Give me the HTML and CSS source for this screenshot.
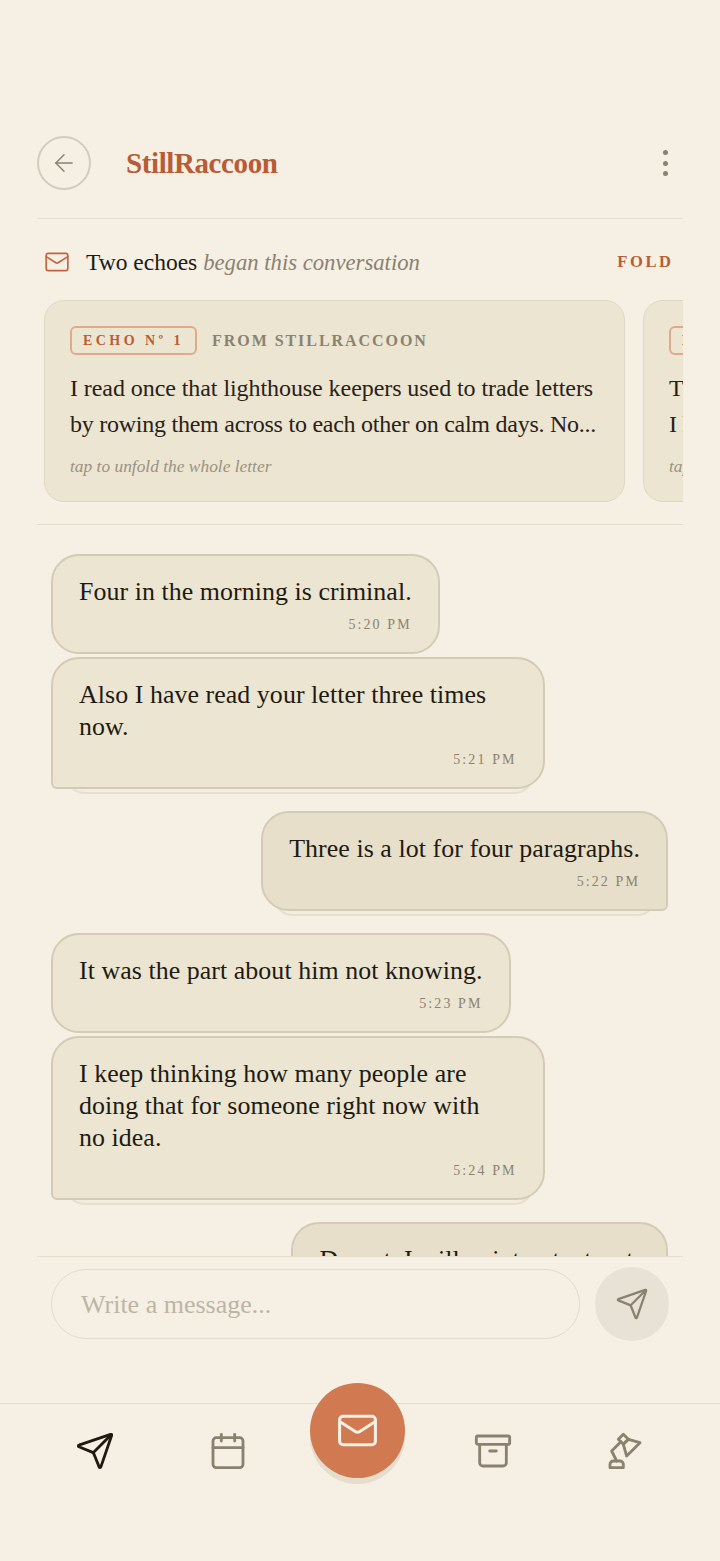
FILE: index.html
```html
<!DOCTYPE html>
<html lang="en">
<head>
<meta charset="utf-8">
<title>StillRaccoon</title>
<link rel="stylesheet" href="styles.css">
</head>
<body>
<div class="page">
  <div class="upper">
    <header class="top">
      <button class="back" aria-label="Back">
        <svg class="ic-back" viewBox="0 0 24 24"><path d="m12 19-7-7 7-7"/><path d="M19 12H5"/></svg>
      </button>
      <h1 class="name">StillRaccoon</h1>
      <div class="dots"><i></i><i></i><i></i></div>
    </header>
    <div class="echoes-row">
      <svg class="ic-mail" viewBox="0 0 24 24"><rect x="2" y="4" width="20" height="16" rx="2"/><path d="m22 7-8.97 5.7a1.94 1.94 0 0 1-2.06 0L2 7"/></svg>
      <p class="echoes-title">Two echoes <em>began this conversation</em></p>
      <span class="fold">FOLD</span>
    </div>
    <div class="cards">
      <article class="card">
        <div class="card-head"><span class="badge">ECHO Nº 1</span><span class="from">FROM STILLRACCOON</span></div>
        <p class="letter"><span class="line">I read once that lighthouse keepers used to trade letters</span><span class="line tight">by rowing them across to each other on calm days. No...</span></p>
        <p class="unfold">tap to unfold the whole letter</p>
      </article>
      <article class="card">
        <div class="card-head"><span class="badge">ECHO Nº 2</span><span class="from">FROM YOU</span></div>
        <p class="letter"><span class="line">The part about the rowing stayed with me all week long.</span><span class="line tight">I have been writing to people the same slow way. So...</span></p>
        <p class="unfold">tap to unfold the whole letter</p>
      </article>
    </div>
  </div>
  <main class="thread">
    <div class="bubble in first"><p>Four in the morning is criminal.</p><time>5:20 PM</time></div>
    <div class="bubble in last"><p>Also I have read your letter three times now.</p><time>5:21 PM</time></div>
    <div class="bubble out solo"><p>Three is a lot for four paragraphs.</p><time>5:22 PM</time></div>
    <div class="bubble in first"><p>It was the part about him not knowing.</p><time>5:23 PM</time></div>
    <div class="bubble in last wide"><p>I keep thinking how many people are doing that for someone right now with<br>no idea.</p><time>5:24 PM</time></div>
    <div class="bubble out solo"><p>Do not. I will point out a toast.</p><time>5:25 PM</time></div>
  </main>
  <div class="composer">
    <input class="field" type="text" placeholder="Write a message...">
    <button class="send" aria-label="Send">
      <svg class="ic-send" viewBox="0 0 24 24"><path d="M14.536 21.686a.5.5 0 0 0 .937-.024l6.5-19a.496.496 0 0 0-.635-.635l-19 6.5a.5.5 0 0 0-.024.937l7.93 3.18a2 2 0 0 1 1.112 1.11z"/><path d="m21.854 2.147-10.94 10.939"/></svg>
    </button>
  </div>
  <nav class="nav">
    <a class="tab active"><svg viewBox="0 0 24 24"><path d="M14.536 21.686a.5.5 0 0 0 .937-.024l6.5-19a.496.496 0 0 0-.635-.635l-19 6.5a.5.5 0 0 0-.024.937l7.93 3.18a2 2 0 0 1 1.112 1.11z"/><path d="m21.854 2.147-10.94 10.939"/></svg></a>
    <a class="tab"><svg viewBox="0 0 24 24"><path d="M8 2v4"/><path d="M16 2v4"/><rect x="3" y="4" width="18" height="18" rx="2"/><path d="M3 10h18"/></svg></a>
    <a class="tab fab-cell"><span class="fab"><svg viewBox="0 0 24 24"><rect x="2" y="4" width="20" height="16" rx="2"/><path d="m22 7-8.97 5.7a1.94 1.94 0 0 1-2.06 0L2 7"/></svg></span></a>
    <a class="tab"><svg viewBox="0 0 24 24"><rect x="2" y="3" width="20" height="5" rx="1"/><path d="M4 8v11a2 2 0 0 0 2 2h12a2 2 0 0 0 2-2V8"/><path d="M10 12h4"/></svg></a>
    <a class="tab"><svg viewBox="0 0 24 24"><path d="m14 5-3 3 2 7 8-8-7-2Z"/><path d="m14 5-3 3-3-3 3-3 3 3Z"/><path d="M9.5 6.5 4 12l3 6"/><path d="M3 22v-2c0-1.1.9-2 2-2h4a2 2 0 0 1 2 2v2H3Z"/></svg></a>
  </nav>
</div>
</body>
</html>
```
FILE: styles.css
```css
* { box-sizing: border-box; }
html, body { margin: 0; padding: 0; }
body {
  background: #f5efe4;
  color: #211a13;
  font-family: "Liberation Serif", serif;
}
svg { fill: none; stroke: currentColor; stroke-linecap: round; stroke-linejoin: round; display: block; }
p, h1 { margin: 0; }
button { padding: 0; background: none; border: 0; }

.page { height: 1561px; display: flex; flex-direction: column; overflow: hidden; }
.upper { padding: 136px 37px 0; flex: none; }

.top { display: flex; align-items: center; height: 83px; padding-bottom: 28px; border-bottom: 1px solid #e5decf; }
.back { width: 54px; height: 54px; border-radius: 50%; border: 2px solid #d3ccbc; display: flex; align-items: center; justify-content: center; color: #8a8270; }
.ic-back { width: 28px; height: 28px; stroke-width: 1.2; }
.name { flex: 1; margin-left: 35px; font-size: 29px; font-weight: 700; letter-spacing: -0.4px; color: #b85c35; line-height: 54px; }
.dots { width: 36px; display: flex; flex-direction: column; align-items: center; gap: 5.5px; }
.dots i { width: 5px; height: 5px; border-radius: 50%; background: #8a8270; }

.echoes-row { display: flex; align-items: center; gap: 16px; height: 81px; padding: 5px 9.5px 0 7px; }
.ic-mail { width: 26px; height: 26px; stroke-width: 1.5; color: #c4633b; flex: none; }
.echoes-title { flex: 1; font-size: 23.5px; color: #211a13; }
.echoes-title em { font-size: 22.7px; color: #8a8270; }
.fold { font-size: 16.5px; font-weight: 700; letter-spacing: 2.6px; color: #b85c35; }

.cards { display: flex; gap: 18px; overflow: hidden; padding: 0 0 22px 7px; border-bottom: 1px solid #e5decf; }
.card { flex: none; width: 581px; height: 202px; padding: 25px 25px 0; background: #ece5d1; border: 1px solid #e0d8c4; border-radius: 20px; }
.card-head { display: flex; align-items: center; gap: 15px; height: 29px; }
.badge { height: 29px; display: flex; align-items: center; padding: 0 11px; border: 2px solid #dfa98e; border-radius: 6px; font-size: 14px; font-weight: 700; letter-spacing: 3.45px; color: #b85c35; }
.from { font-size: 16px; font-weight: 700; letter-spacing: 1.95px; color: #8a8270; }
.letter { margin-top: 15px; font-size: 24px; line-height: 36px; white-space: nowrap; color: #2a2118; }
.line { display: block; letter-spacing: -0.07px; }
.line.tight { letter-spacing: -0.25px; }
.unfold { margin-top: 14px; font-size: 17.4px; font-style: italic; color: #9a9280; }

.thread { flex: 1; min-height: 0; overflow: hidden; margin: 0 37px; padding: 29px 15px 0 14px; display: flex; flex-direction: column; align-items: flex-start; position: relative; z-index: 0; }
.bubble { position: relative; flex: none; max-width: 80%; width: fit-content; padding: 20px 26px 17px 26px; border: 2px solid #d4cbb6; background: #ece5d1; border-radius: 28px; margin-bottom: 22px; }
.bubble.wide { width: 80%; }
.bubble p { font-size: 25.9px; letter-spacing: 0.06px; line-height: 32px; }
.bubble time { display: block; margin-top: 7px; height: 20px; line-height: 20px; text-align: right; font-size: 14px; letter-spacing: 2.1px; color: #8a8270; }
.bubble.first { margin-bottom: 3px; }
.bubble.last { border-bottom-left-radius: 6px; }
.bubble.out { align-self: flex-end; background: #e7dfca; border-bottom-right-radius: 6px; }
.bubble.last::after, .bubble.out::after { content: ""; position: absolute; left: 12px; right: 9px; bottom: -7px; height: 30px; z-index: -1; background: #f3ecdf; border: 2px solid #e7e0d0; border-radius: 0 0 20px 20px; }
.bubble.out::after { left: 10px; }

.composer { flex: none; height: 147px; margin: 0 37px; padding: 10px 14px 0 14px; border-top: 1px solid #e5decf; display: flex; align-items: flex-start; gap: 15px; background: #f5efe4; position: relative; z-index: 1; }
.field { flex: 1; min-width: 0; height: 70px; margin-top: 2px; padding: 2px 29px 0; border: 1px solid #e3dccc; border-radius: 35px; background: transparent; font: 26px "Liberation Serif", serif; color: #211a13; }
.field::placeholder { color: #bdb5a4; opacity: 1; }
.send { flex: none; width: 74px; height: 74px; border-radius: 50%; background: #e8e2d6; display: flex; align-items: center; justify-content: center; color: #8a8270; }
.ic-send { width: 34px; height: 34px; stroke-width: 1.6; }

.nav { flex: none; height: 158px; border-top: 1px solid #e5decf; display: grid; grid-template-columns: repeat(5, 132.5px); padding: 27px 0 0 29px; align-items: start; justify-items: center; position: relative; z-index: 2; }
.tab { color: #8a8270; display: block; }
.tab svg { width: 40px; height: 40px; stroke-width: 1.7; }
.tab.active { color: #211a13; }
.fab-cell { margin-top: -48px; margin-right: 5px; }
.fab { width: 95px; height: 95px; border-radius: 50%; background: #d17a52; box-shadow: 0 6px 0 #e5decf; display: flex; align-items: center; justify-content: center; color: #f8f0e2; }
.tab .fab svg { width: 43px; height: 43px; stroke-width: 1.7; }
```
